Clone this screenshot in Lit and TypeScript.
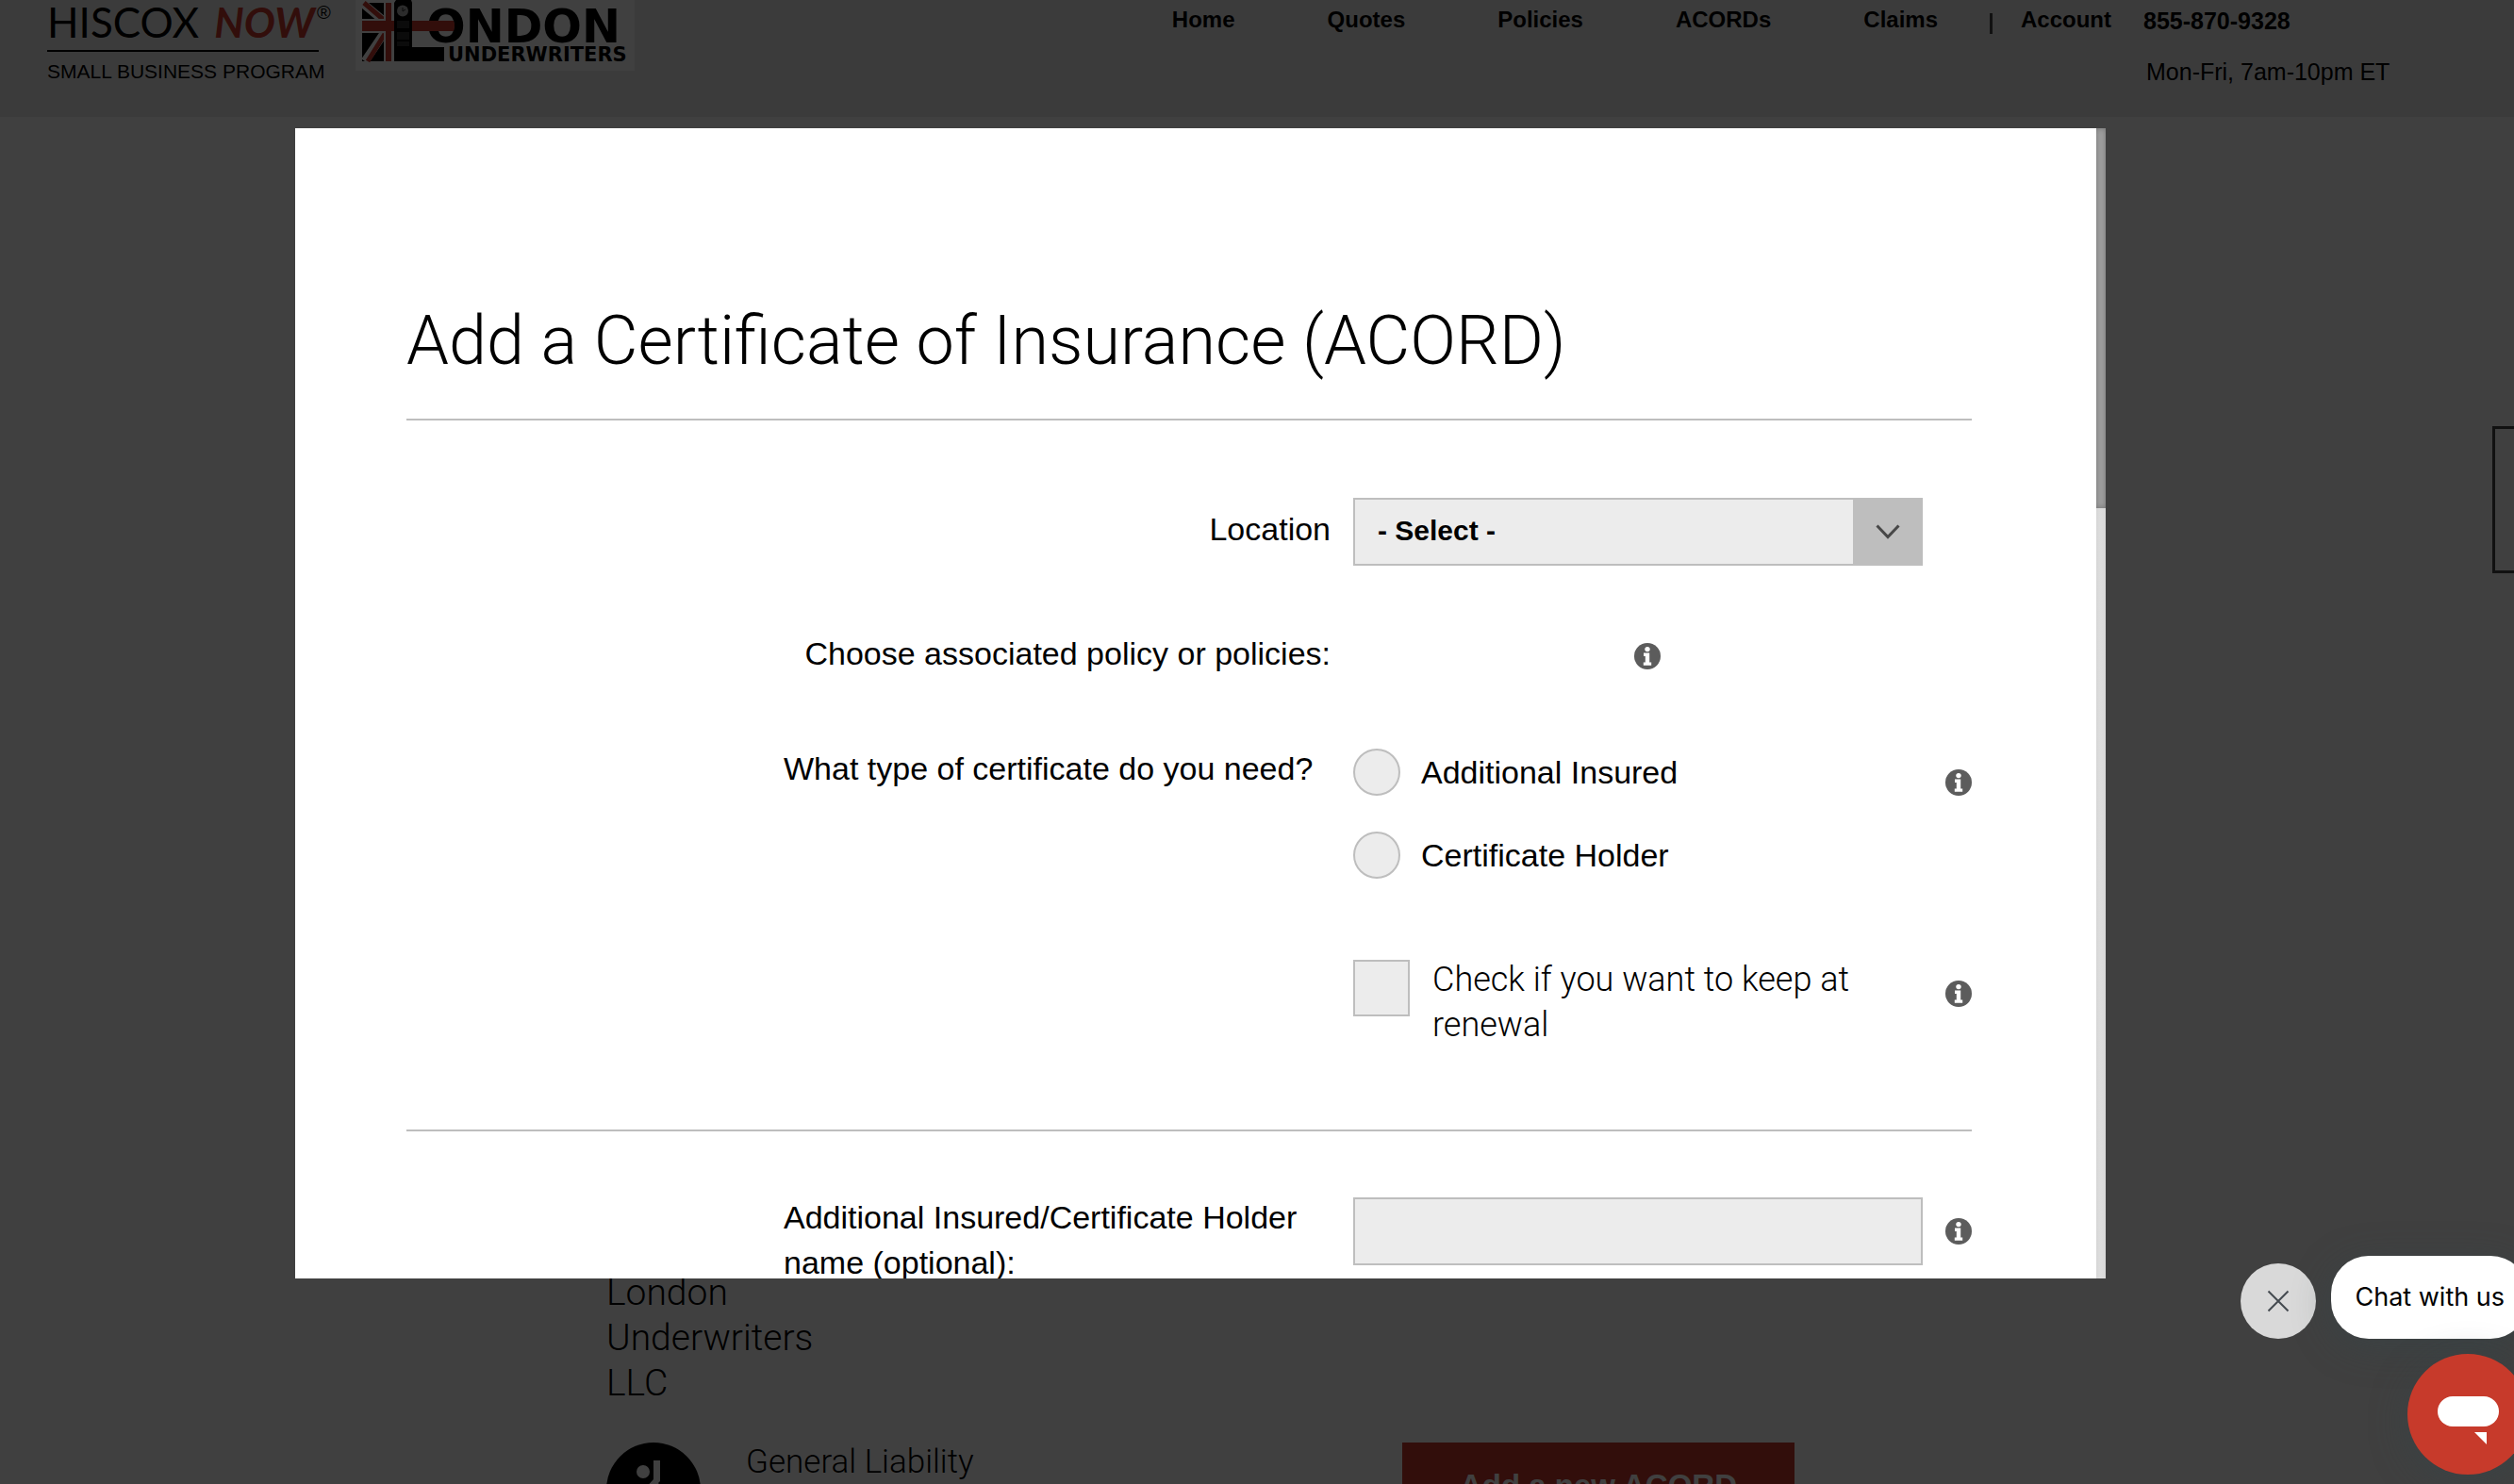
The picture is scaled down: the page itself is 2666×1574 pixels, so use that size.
import { LitElement, html, css, svg } from "lit";
import { customElement } from "lit/decorators.js";

const infoIcon = svg`
  <circle cx="14" cy="14" r="14" fill="#5c5c5c"></circle>
  <circle cx="14" cy="6.6" r="2.7" fill="#fff"></circle>
  <path d="M10 10.6h6.2v10h2v3.2H9.8v-3.2h2v-6.6H10z" fill="#fff"></path>`;

@customElement("info-tip")
class InfoTip extends LitElement {
  static styles = css`
    :host { display: block; width: 28px; height: 28px; }
    .tip { display: block; width: 28px; height: 28px; padding: 0; border: 0; background: none; cursor: pointer; }
    .icon { display: block; }
  `;
  render() {
    return html`<button class="tip" type="button" aria-label="More information">
      <svg class="icon" width="28" height="28" viewBox="0 0 28 28">${infoIcon}</svg>
    </button>`;
  }
}

@customElement("site-header")
class SiteHeader extends LitElement {
  static styles = css`
    :host { display: block; font-family: "Liberation Sans", Arial, sans-serif; color: #000; }
    .bar { display: flex; align-items: flex-start; height: 124px; padding: 0 133px 0 50px; background: #ececec; box-sizing: border-box; }
    .brand { width: 288px; flex: none; color: #000; text-decoration: none; }
    .wordmark { display: flex; gap: 16px; height: 53px; border-bottom: 2px solid #000; font: 400 44px/46px Lato, sans-serif; white-space: nowrap; }
    .now { font-weight: 700; font-style: italic; color: #c8382c; }
    .reg { margin-left: -14px; font: 400 20px/26px "Liberation Sans", Arial, sans-serif; }
    .tagline { padding-top: 9px; font-size: 21px; line-height: 24px; white-space: nowrap; }
    .partner { display: block; flex: none; margin-left: 39px; }
    .right { display: flex; margin-left: auto; }
    .nav { display: flex; gap: 98px; padding-top: 7px; font-size: 24px; line-height: 28px; font-weight: 700; }
    .link { color: #000; text-decoration: none; }
    .account { margin-left: 55px; padding: 7px 34px 0 0; display: flex; gap: 30px; font-size: 24px; line-height: 28px; font-weight: 700; }
    .sep { width: 3px; height: 22px; margin-top: 7px; background: #444; }
    .phone { width: 260px; padding-top: 8px; font-size: 25px; line-height: 28px; white-space: nowrap; }
    .number { display: block; font-weight: 700; color: #000; text-decoration: none; }
    .hours { padding: 26px 0 0 3px; }
    .big { font: 700 49px "DejaVu Sans", sans-serif; }
    .small { font: 700 21px "DejaVu Sans", sans-serif; }
  `;
  render() {
    return html`<header class="bar">
      <a class="brand" href="#">
        <div class="wordmark"><span>HISCOX</span><span class="now">NOW</span><span class="reg">®</span></div>
        <div class="tagline">SMALL BUSINESS PROGRAM</div>
      </a>
      <svg class="partner" width="296" height="75" viewBox="0 0 296 75" role="img" aria-label="London Underwriters">
        <rect width="296" height="75" fill="#fff"></rect>
        <path d="M7 3h24v62H7z" fill="#000"></path>
        <path d="M7 3l24 20M31 34L10 65" stroke="#fff" stroke-width="9"></path>
        <path d="M9 3l22 19M31 36L13 65" stroke="#c8382c" stroke-width="5"></path>
        <path d="M7 20h34v15H7zM30 3h9v62h-9z" fill="#fff"></path>
        <path d="M7 22h34v11H7zM32 3h6v62h-6z" fill="#c8382c"></path>
        <text class="big" x="75" y="45">ONDON</text>
        <path d="M60 22h44q2 5 0 11H60z" fill="#c8382c"></path>
        <path d="M43 0h16l1 3v47h34v15H41V3z" fill="#000"></path>
        <circle cx="50" cy="11.500" r="6" fill="#aaa"></circle>
        <path d="M50 8v4l3-2" stroke="#333" fill="none"></path>
        <path d="M44 22h13v8H44zM44 34h13v8H44zM44 44h13v5H44z" fill="#2c2c2c"></path>
        <text class="small" x="98" y="65">UNDERWRITERS</text>
      </svg>
      <div class="right">
        <nav class="nav">
          ${["Home", "Quotes", "Policies", "ACORDs", "Claims"].map((n) => html`<a class="link" href="#">${n}</a>`)}
        </nav>
        <div class="account"><span class="sep"></span><a class="link" href="#">Account</a></div>
        <div class="phone">
          <a class="number" href="tel:8558709328">855-870-9328</a>
          <div class="hours">Mon-Fri, 7am-10pm ET</div>
        </div>
      </div>
    </header>`;
  }
}

@customElement("acord-form")
class AcordForm extends LitElement {
  static styles = css`
    :host { display: block; min-width: 0; flex: 1; }
    .body { padding: 184px 132px 60px 118px; font: 400 34px/48px "Liberation Sans", Arial, sans-serif; color: #000; }
    .title { margin: 0; padding-bottom: 40px; border-bottom: 2px solid #bebebe; font: 300 72px/84px Roboto, sans-serif; }
    .row { display: grid; grid-template-columns: minmax(0, 580px) 604px 28px; column-gap: 24px; justify-content: end; align-items: start; }
    .location { margin-top: 79px; }
    .policies { margin-top: 69px; }
    .type { margin-top: 74px; }
    .renewal { margin-top: 83px; padding-bottom: 87px; }
    .holder { padding-top: 67px; }
    .rule { margin: 0; border: 0; border-top: 2px solid #bebebe; }
    .end { text-align: right; }
    .location .end { padding-top: 12px; }
    .control { margin-top: 3px; }
    .tip { margin-top: 25px; }
    .inline-tip { margin: 13px 0 0 298px; }
    .select { display: grid; grid-template-columns: 1fr 74px; }
    .field { grid-area: 1 / 1 / 2 / 3; width: 100%; height: 72px; box-sizing: border-box; margin: 0; padding: 0 24px 2px; border: 2px solid #bebebe; border-radius: 0; background: #ececec; color: #000; font: 700 30px/36px "Liberation Sans", Arial, sans-serif; appearance: none; }
    .arrow { grid-area: 1 / 2; display: grid; place-items: center; background: #bebebe; pointer-events: none; }
    .options { display: grid; gap: 38px; }
    .option { display: flex; gap: 22px; line-height: 50px; }
    .radio { appearance: none; width: 50px; height: 50px; margin: 0; border: 2px solid #bebebe; border-radius: 50%; background: #ececec; }
    .check-row { display: flex; gap: 24px; font: 300 36px/48px Roboto, sans-serif; }
    .check { appearance: none; flex: none; width: 60px; height: 60px; margin: 3px 0 0; border: 2px solid #bebebe; background: #ececec; }
    .check-text { max-width: 480px; }
  `;
  render() {
    return html`<form class="body">
      <h1 class="title">Add a Certificate of Insurance (ACORD)</h1>
      <div class="row location">
        <label class="end" for="location">Location</label>
        <div class="control select">
          <select class="field" id="location"><option>- Select -</option></select>
          <span class="arrow"><svg width="26" height="16" viewBox="0 0 26 16"><path d="M1.500 1.500L13 13.500L24.500 1.500" fill="none" stroke="#484848" stroke-width="3"></path></svg></span>
        </div>
      </div>
      <div class="row policies">
        <div class="end">Choose associated policy or policies:</div>
        <info-tip class="inline-tip"></info-tip>
      </div>
      <div class="row type">
        <div id="type-label">What type of certificate do you need?</div>
        <div class="control options" role="radiogroup" aria-labelledby="type-label">
          ${["Additional Insured", "Certificate Holder"].map((n) => html`<label class="option"><input class="radio" type="radio" name="type" .value=${n}>${n}</label>`)}
        </div>
        <info-tip class="tip"></info-tip>
      </div>
      <div class="row renewal">
        <span></span>
        <label class="check-row"><input class="check" type="checkbox"><span class="check-text">Check if you want to keep at renewal</span></label>
        <info-tip class="tip"></info-tip>
      </div>
      <hr class="rule">
      <div class="row holder">
        <label for="holder">Additional Insured/Certificate Holder name (optional):</label>
        <div class="control select"><input class="field" id="holder" type="text"></div>
        <info-tip class="tip"></info-tip>
      </div>
    </form>`;
  }
}

@customElement("chat-launcher")
class ChatLauncher extends LitElement {
  static styles = css`
    :host { display: flex; flex-direction: column; align-items: flex-end; gap: 16px; font: 400 27px/32px Inter, sans-serif; }
    .prompt { display: flex; align-items: flex-end; gap: 16px; }
    .close { display: grid; place-items: center; width: 80px; height: 80px; padding: 0; border: 0; border-radius: 50%; background: #d9d9d9; }
    .pill { height: 88px; padding: 0 25px; border: 0; border-radius: 40px; background: #fff; color: #000; font: inherit; white-space: nowrap; box-shadow: 0 8px 40px rgba(50, 70, 75, 0.4); }
    .launch { width: 128px; height: 128px; padding: 0; border: 0; border-radius: 50%; background: #c73a2b; box-shadow: 0 8px 40px rgba(50, 70, 75, 0.4); }
    .icon { display: block; }
  `;
  render() {
    return html`
      <div class="prompt">
        <button class="close" type="button" aria-label="Close">
          <svg class="icon" width="24" height="24" viewBox="0 0 24 24"><path d="M1.500 1.500l21 21M22.500 1.500l-21 21" stroke="#444a50" stroke-width="2"></path></svg>
        </button>
        <button class="pill" type="button">Chat with us</button>
      </div>
      <button class="launch" type="button" aria-label="Open chat">
        <svg class="icon" width="128" height="128" viewBox="0 0 128 128">
          <rect x="32" y="45" width="65" height="32" rx="16" fill="#fff"></rect>
          <path d="M71 83h13v13z" fill="#fff"></path>
        </svg>
      </button>`;
  }
}

@customElement("app-root")
class AppRoot extends LitElement {
  static styles = css`
    :host { display: block; height: 100vh; overflow: hidden; position: relative; background: #fff; color: #000; }
    .main { max-width: 1380px; margin: 0 auto; padding-top: 1223px; font-family: Roboto, sans-serif; font-weight: 300; }
    .insured { width: 230px; font-size: 39px; line-height: 48px; }
    .policy { display: grid; grid-template-columns: 100px 648px 416px; gap: 48px; padding-top: 39px; }
    .product { font-size: 35px; line-height: 42px; }
    .icon { display: block; }
    .add { height: 92px; padding: 0; border: 0; background: #c8382c; color: #fff; font: 700 33px/40px "Liberation Sans", Arial, sans-serif; }
    .side-tab { position: absolute; top: 452px; right: -60px; width: 83px; height: 156px; box-sizing: border-box; border: 3px solid #444; background: none; }
    .overlay { position: absolute; inset: 0; display: flex; padding: 136px 433px 218px 313px; background: rgba(0, 0, 0, 0.75); }
    .modal { display: flex; flex: 1; min-width: 0; overflow: hidden; background: #fff; }
    .track { flex: none; width: 10px; background: linear-gradient(90deg, #d6d6d6, #dedede 50%, #d8d8d8); }
    .thumb { height: 33%; background: #a2a2a2; box-shadow: inset 0 0 6px rgba(0, 0, 0, 0.3); }
    .chat { position: absolute; right: -15px; bottom: 10px; }
  `;
  render() {
    return html`
      <site-header></site-header>
      <main class="main">
        <div class="insured">London Underwriters LLC</div>
        <div class="policy">
          <svg class="icon" width="100" height="100" viewBox="0 0 100 100">
            <circle cx="50" cy="50" r="50" fill="#000"></circle>
            <circle cx="39" cy="31" r="7" fill="#fff"></circle>
            <path d="M50 19h7v22l-2 2 4 5 6 20h-8l-8-17-8 18h-8l6-18 11-12z" fill="#fff"></path>
          </svg>
          <div class="product">General Liability</div>
          <button class="add" type="button">Add a new ACORD</button>
        </div>
      </main>
      <button class="side-tab" type="button" aria-label="Feedback"></button>
      <div class="overlay">
        <div class="modal" role="dialog" aria-modal="true">
          <acord-form></acord-form>
          <div class="track"><div class="thumb"></div></div>
        </div>
      </div>
      <chat-launcher class="chat"></chat-launcher>`;
  }
}
